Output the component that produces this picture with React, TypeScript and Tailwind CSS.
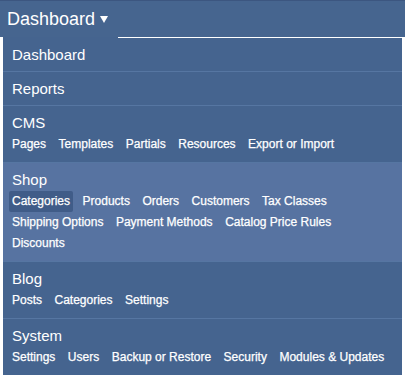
const sections: { title: string; links?: string[]; hover?: boolean }[] = [
  { title: "Dashboard" },
  { title: "Reports" },
  {
    title: "CMS",
    links: ["Pages", "Templates", "Partials", "Resources", "Export or Import"],
  },
  {
    title: "Shop",
    hover: true,
    links: [
      "Categories",
      "Products",
      "Orders",
      "Customers",
      "Tax Classes",
      "Shipping Options",
      "Payment Methods",
      "Catalog Price Rules",
      "Discounts",
    ],
  },
  { title: "Blog", links: ["Posts", "Categories", "Settings"] },
  {
    title: "System",
    links: ["Settings", "Users", "Backup or Restore", "Security", "Modules & Updates"],
  },
];

export default function App() {
  return (
    <div
      className="w-[405px] h-[380px] bg-white text-white"
      style={{ fontFamily: '"Liberation Sans", Arial, sans-serif' }}
    >
      {/* Top bar with trigger */}
      <div className="h-[37px] bg-[#46658f] border-t border-[#3c5680] flex items-center pl-[7px]">
        <span className="text-[18px] leading-none">Dashboard</span>
        <svg className="ml-[5px] mt-[1px]" width="8" height="7" viewBox="0 0 8 7">
          <path d="M0 0H8L4 7Z" fill="#fff" />
        </svg>
      </div>

      {/* Dropdown */}
      <div className="ml-[3px] w-[399px] bg-[#45648f]">
        <div className="flex">
          <div className="w-[115px] h-px bg-[#45648f]" />
          <div className="flex-1 h-px bg-white" />
        </div>
        {sections.map((s, i) => (
          <div
            key={s.title}
            className={`${i > 0 ? "border-t border-[#5676a2]" : ""} ${
              s.hover ? "bg-[#5773a1]" : ""
            } pt-[7px] ${s.links ? "pb-[7px]" : "pb-[6px]"} px-[6px]`}
          >
            <div className="text-[15px] leading-5 px-[3px]">{s.title}</div>
            {s.links && (
              <div className="mt-[1px] flex flex-wrap gap-x-[6.5px]">
                {s.links.map((l, j) => (
                  <span
                    key={l}
                    className={`text-[12px] leading-[21px] px-[3px] rounded-[2px] text-white [-webkit-text-stroke:0.25px_#fff] ${
                      s.hover && j === 0 ? "bg-[#405c88]" : ""
                    }`}
                  >
                    {l}
                  </span>
                ))}
              </div>
            )}
          </div>
        ))}
      </div>
    </div>
  );
}
